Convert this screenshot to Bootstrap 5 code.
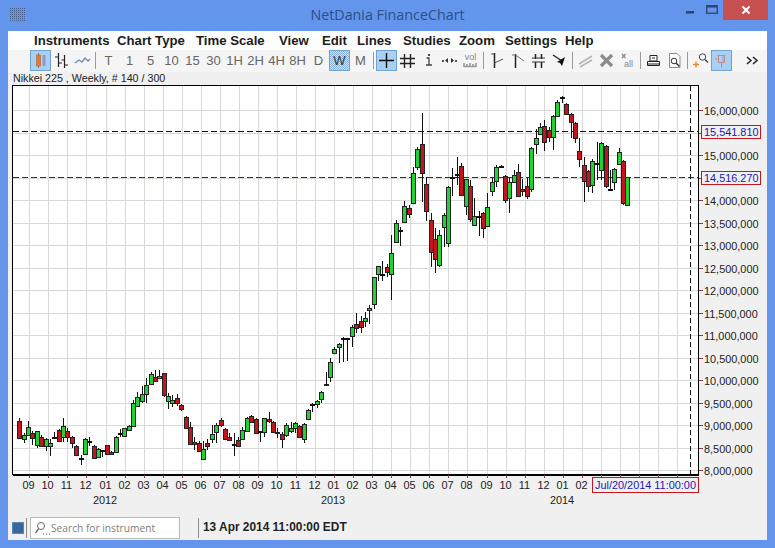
<!DOCTYPE html>
<html lang="en">
<head>
<meta charset="utf-8">
<title>NetDania FinanceChart</title>
<link rel="stylesheet" href="https://cdn.jsdelivr.net/npm/bootstrap@5.3.0/dist/css/bootstrap.min.css">
<style>
html,body{height:100%;overflow:hidden}
body{background:#6495ed;font-family:"Liberation Sans",Arial,sans-serif;color:#222}
.wnd{width:775px;height:548px}
.ttl{height:31px;flex:none;padding:0 7px 0 10px}
.ttl-text{flex:1;text-align:center;font:14.3px/20px "Open Sans",sans-serif;color:#2c4f86;padding:5px 0 0 70px}
.wctl{width:22px;height:20px}
.wclose{width:45px;height:20px;background:#c75050}
.client{flex:1;margin:0 8px 8px 8px;background:#f0f0f0;min-height:0}
.menubar{height:19px;flex:none;background:#fff;padding:1px 0 0 26px;font-weight:700;font-size:13.2px;line-height:18px;color:#1c1c1c}
.menubar span{white-space:nowrap;flex:none}
.menubar span:nth-child(1){width:83px}
.menubar span:nth-child(2){width:79px}
.menubar span:nth-child(3){width:83px}
.menubar span:nth-child(4){width:43px}
.menubar span:nth-child(5){width:35px}
.menubar span:nth-child(6){width:46px}
.menubar span:nth-child(7){width:56px}
.menubar span:nth-child(8){width:46px}
.menubar span:nth-child(9){width:60px}
.tools{height:22px;flex:none;padding:0 0 0 22px;background:#f5f5f5}
.tb{width:21px;height:21px;padding:0;border:1px solid transparent;border-radius:0;background:none;flex:none;font:13px/19px "Liberation Sans",sans-serif;color:#666;text-align:center;white-space:nowrap}
.tb svg{display:block;margin:1px}
.tb.on{background:#a9cff2;border-color:#6fa3d6}
.tb.pick{background:repeating-conic-gradient(#86aedb 0 25%,#d5e5f5 0 50%) 0 0/2px 2px;border-color:#6fa3d6;color:#333}
.tsep{width:1px;height:17px;background:#9a9a9a;margin:2px 2px 0;flex:none}
.infoline{height:13px;flex:none;font-size:10.7px;line-height:13px;padding-left:5px;color:#222;white-space:nowrap}
.plot{display:block;flex:none}
.plot text{font-family:"Liberation Sans",sans-serif;font-size:10.9px;fill:#222}
.plot text.hl{fill:#1a1ab4}
.plot .blueline{stroke:#1a1aff}
.statusbar{height:26px;flex:none;padding-left:4px}
.swatch{width:12px;height:12px;background:#37689d;border:1px solid #5a86b4;flex:none}
.ssep{width:1px;height:20px;background:#8c8c8c;flex:none}
.ssep-a{margin:0 3px 0 2px}
.ssep-b{margin:0 4px 0 18px}
.searchbox{width:150px;height:22px;background:#fff;border:1px solid #b9b9b9;font:10.2px/20px "Open Sans",sans-serif;color:#808080;padding-left:2px;flex:none}
.searchbox svg{flex:none}
.clock{font-weight:700;font-size:11.9px;color:#222;white-space:nowrap}
</style>
</head>
<body>
<div class="wnd d-flex flex-column">
  <div class="ttl d-flex align-items-start">
    <svg width="16" height="14" class="mt-2" aria-hidden="true"><defs><pattern id="dots" width="2" height="2" patternUnits="userSpaceOnUse"><rect width="1" height="1" fill="#44608f"/></pattern></defs><rect width="16" height="14" fill="url(#dots)"/></svg>
    <div class="ttl-text">NetDania FinanceChart</div>
    <div class="wctl d-flex align-items-center justify-content-center"><svg width="8" height="8" aria-hidden="true"><rect y="5" width="8" height="2.5" fill="#2d4468"/></svg></div>
    <div class="wctl d-flex align-items-center justify-content-center"><svg width="12" height="10" aria-hidden="true"><rect x=".75" y=".75" width="10.5" height="7.5" fill="none" stroke="#2d4468" stroke-width="1.3"/><rect x=".5" y=".5" width="11" height="2" fill="#2d4468"/></svg></div>
    <div class="wclose d-flex align-items-center justify-content-center"><svg width="10" height="10" aria-hidden="true"><path d="M1.5 1.5l7 7M8.5 1.5l-7 7" stroke="#fff" stroke-width="2"/></svg></div>
  </div>
  <div class="client d-flex flex-column">
    <div class="menubar d-flex">
      <span>Instruments</span><span>Chart Type</span><span>Time Scale</span><span>View</span><span>Edit</span><span>Lines</span><span>Studies</span><span>Zoom</span><span>Settings</span><span>Help</span>
    </div>
    <div class="tools d-flex align-items-start">
      <button class="tb on" title="Candles"><svg width="17" height="17"><path d="M6.500 1v15" stroke="#8a7a6a"/><rect x="4.500" y="3" width="4" height="11" fill="#e8782c" stroke="#b06a3a" stroke-width=".6"/><path d="M12 3v11" stroke="#8aa0b8" stroke-width="3"/></svg></button>
      <button class="tb"><svg width="17" height="17"><path d="M5.500 1v14M2 5h3.500M5.500 11H9M11.500 3v13M8.500 8h3M11.500 13H15" stroke="#222" stroke-width="1.200" fill="none"/></svg></button>
      <button class="tb"><svg width="17" height="17"><path d="M1 11l4-3 3 2 3-4 3 3 2-2" stroke="#6f8fb2" stroke-width="1.400" fill="none"/></svg></button>
      <span class="tsep"></span>
      <button class="tb">T</button><button class="tb">1</button><button class="tb">5</button><button class="tb">10</button><button class="tb">15</button><button class="tb">30</button><button class="tb">1H</button><button class="tb">2H</button><button class="tb">4H</button><button class="tb">8H</button><button class="tb">D</button><button class="tb pick">W</button><button class="tb">M</button>
      <span class="tsep"></span>
      <button class="tb on"><svg width="17" height="17"><path d="M8.500 1v15M1 8.500h15" stroke="#111" stroke-width="1.400"/></svg></button>
      <button class="tb"><svg width="17" height="17"><path d="M5.500 2v14M11.500 2v14M1 6.500h15M1 11.500h15" stroke="#222" stroke-width="1.400"/></svg></button>
      <button class="tb"><svg width="17" height="17"><path d="M6.500 6h2.500v6.500M6 13h6" stroke="#444" stroke-width="1.300" fill="none"/><rect x="8" y="2" width="2" height="2" fill="#444"/></svg></button>
      <button class="tb"><svg width="17" height="17"><path d="M7 6v5L4 8.500zM10 6v5l3-2.500z" fill="#333"/><rect x="1" y="8" width="2" height="2" fill="#555"/><rect x="14" y="8" width="2" height="2" fill="#555"/></svg></button>
      <button class="tb"><svg width="17" height="17"><text x="8.500" y="8" text-anchor="middle" font-size="9" font-family="Liberation Sans" fill="#888">vol</text><path d="M2 15v-4M5 15v-3M8 15v-4M11 15v-3M14 15v-4M2 14.500h12" stroke="#999" stroke-width="1.600"/></svg></button>
      <span class="tsep"></span>
      <button class="tb"><svg width="17" height="17"><path d="M6.500 1v15" stroke="#222" stroke-width="1.500"/><path d="M6.500 11L15 7M3 2h3" stroke="#555"/></svg></button>
      <button class="tb"><svg width="17" height="17"><path d="M6.500 2v14" stroke="#222" stroke-width="1.500"/><path d="M3 3h3.500L15 9" stroke="#777" fill="none"/></svg></button>
      <button class="tb"><svg width="17" height="17"><path d="M5.500 2v5M11.500 2v5M5.500 10v6M11.500 10v6" stroke="#222" stroke-width="1.500"/><path d="M2 6h13M2 10h13" stroke="#333"/></svg></button>
      <button class="tb"><svg width="17" height="17"><path d="M2 3l9 6" stroke="#222" stroke-width="1.400"/><path d="M14 5l-3 9-2-3-3-1z" fill="#111"/></svg></button>
      <span class="tsep"></span>
      <button class="tb"><svg width="17" height="17"><path d="M2 12L15 4M3 15l12-7" stroke="#b4b4b4" stroke-width="1.500"/></svg></button>
      <button class="tb"><svg width="17" height="17"><path d="M3 3l11 11M14 3L3 14" stroke="#8c8c8c" stroke-width="3.200"/></svg></button>
      <button class="tb"><svg width="17" height="17"><path d="M3 2l3.500 4M6.500 2L3 6" stroke="#8c8c8c" stroke-width="1.400"/><text x="5" y="15" font-size="9" font-family="Liberation Sans" fill="#888">all</text></svg></button>
      <span class="tsep"></span>
      <button class="tb"><svg width="17" height="17"><path d="M5 3.500h7V9H5z" fill="#fff" stroke="#222"/><path d="M2.500 9.500h12v4h-12z" fill="#fff" stroke="#222"/><path d="M2 12h13" stroke="#222"/><path d="M7 6h3" stroke="#222"/></svg></button>
      <button class="tb"><svg width="17" height="17"><path d="M3.500 1.500H11l3 3v11H3.500z" fill="#fff" stroke="#8c8c8c"/><circle cx="8" cy="9" r="2.800" fill="#fff" stroke="#333"/><path d="M10 11l3.500 3.500" stroke="#333" stroke-width="1.400"/></svg></button>
      <span class="tsep"></span>
      <button class="tb"><svg width="17" height="17"><circle cx="10.500" cy="5" r="3.200" fill="none" stroke="#445"/><path d="M13 7.500l3 3" stroke="#445" stroke-width="1.400"/><path d="M1 12.500h6M4 9.500v6" stroke="#e8862c" stroke-width="1.400"/></svg></button>
      <button class="tb on"><svg width="17" height="17"><path d="M4.500 3.500h8M5.500 3.500v7h6v-7M8.500 10.500v5M2 7h2" stroke="#c68a86" fill="none"/><path d="M10 3.500v7" stroke="#8aa6c8"/></svg></button>
      <button class="tb ms-auto me-1"><svg width="17" height="17"><path d="M3 5l4 3.500-4 3.500M9 5l4 3.500-4 3.500" stroke="#222" stroke-width="1.500" fill="none"/></svg></button>
    </div>
    <div class="infoline">Nikkei 225 , Weekly, # 140 / 300</div>
    <svg id="plot" class="plot" width="759" height="430" viewBox="8 85 759 430" shape-rendering="crispEdges" role="img" aria-label="Nikkei 225 weekly candlestick chart"></svg>
    <div class="statusbar d-flex align-items-center">
      <span class="swatch"></span>
      <span class="ssep ssep-a"></span>
      <div class="searchbox d-flex align-items-center"><svg width="18" height="16" aria-hidden="true"><circle cx="8" cy="6" r="3.500" fill="none" stroke="#666"/><path d="M5.500 9l-3 4" stroke="#666" stroke-width="1.300"/><path d="M10 14h1M13 14h1M16 14h1" stroke="#666"/></svg>Search for instrument</div>
      <span class="ssep ssep-b"></span>
      <span class="clock">13 Apr 2014 11:00:00 EDT</span>
    </div>
  </div>
</div>
<script src="https://cdn.jsdelivr.net/npm/bootstrap@5.3.0/dist/js/bootstrap.bundle.min.js"></script>
<script>
// candles: [wick top, wick bottom, body top, body bottom, colour], y = offset + value/3
var segs=[
[360,[[175,236,183,235,'R'],[218,248,224,238,'G'],[183,228,202,224,'G'],[212,255,220,233,'R'],[213,265,214,254,'G'],[226,260,230,258,'R'],[235,272,238,257,'G'],[237,288,250,257,'G'],[217,238,230,232,'K'],[208,245,211,242,'R'],[175,245,199,230,'G'],[205,245,214,231,'R'],[228,265,232,250,'R'],[255,285,259,284,'R'],[285,314,293,295,'K'],[235,283,238,281,'G'],[230,258,243,245,'K'],[256,295,259,293,'R'],[265,290,268,290,'G'],[270,290,270,272,'K'],[254,284,256,282,'R'],[272,285,275,283,'R'],[228,276,230,275,'G'],[208,232,218,222,'K'],[203,228,205,227,'G'],[195,212,197,209,'G'],[120,200,130,199,'G'],[97,138,112,137,'G'],[78,128,103,122,'G'],[55,130,76,101,'G'],[35,75,43,73,'G'],[30,63,50,62,'R'],[30,57,48,55,'G'],[38,110,40,105,'R'],[100,147,109,122,'G'],[105,140,121,128,'G'],[102,138,115,128,'R'],[132,152,134,146,'R'],[168,205,170,203,'R'],[185,252,200,252,'R']]],
[370,[[200,240,216,222,'R'],[213,245,219,243,'R'],[214,268,238,266,'G'],[208,240,219,227,'R'],[165,220,192,206,'G'],[158,218,166,187,'G'],[145,170,150,164,'R'],[175,210,178,206,'R'],[190,212,202,211,'R'],[190,257,222,226,'K'],[200,232,211,227,'R'],[170,210,181,208,'G'],[142,185,144,184,'G'],[135,160,139,157,'R'],[145,188,148,188,'R'],[183,215,184,187,'K'],[143,200,145,187,'G'],[127,158,146,152,'R'],[153,187,156,185,'R'],[175,205,185,190,'G'],[187,233,191,208,'R'],[160,200,166,196,'G'],[157,188,175,184,'G'],[155,190,160,173,'G'],[165,203,167,200,'R'],[160,218,163,208,'G'],[118,150,119,148,'G'],[98,125,103,107,'K'],[90,115,94,101,'G'],[62,100,66,88,'G'],[7,48,41,46,'G']]],
[190,[[505,575,516,560,'G'],[472,490,478,490,'G'],[460,518,462,472,'G'],[442,515,445,447,'K'],[445,512,445,449,'K'],[405,470,411,437,'G'],[370,430,403,415,'R'],[378,428,392,412,'R'],[366,410,385,394,'G'],[345,403,354,361,'G'],[262,357,262,343,'G'],[227,272,227,253,'G'],[213,272,253,256,'K'],[223,262,232,247,'R'],[135,330,190,253,'G'],[90,158,100,157,'G'],[112,167,121,124,'K'],[33,100,48,95,'G'],[45,83,53,73,'R']]],
[90,[[230,338,250,338,'G'],[170,240,177,230,'G'],[70,335,163,250,'R'],[260,392,283,362,'R'],[370,530,391,485,'R'],[415,548,448,508,'R'],[420,530,436,524,'G'],[370,470,376,412,'G'],[288,472,290,458,'G'],[235,318,262,265,'K'],[202,285,252,255,'K'],[220,315,229,314,'R'],[270,375,268,347,'G'],[270,395,289,386,'R'],[325,405,379,404,'G'],[362,438,377,380,'K'],[365,443,369,415,'R'],[310,410,352,409,'G'],[265,318,277,302,'G'],[225,290,232,272,'G'],[225,235,229,232,'K'],[255,340,259,329,'R'],[265,368,277,325,'G'],[240,280,256,277,'G'],[222,320,247,319,'R'],[268,318,297,302,'R'],[265,328,289,319,'R'],[172,305,175,296,'G'],[118,192,145,163,'G'],[100,132,110,131,'G'],[90,183,109,157,'R'],[110,155,121,142,'R'],[75,180,78,142,'G'],[30,80,36,79,'G'],[18,40,21,24,'K'],[40,75,42,73,'R'],[70,145,73,97,'R'],[95,160,100,145,'R'],
[145,230,184,208,'R'],[200,335,226,272,'R'],[240,305,243,289,'R'],[208,310,213,286,'G'],[155,270,220,222,'K'],[155,270,160,241,'G'],[165,295,169,289,'R'],[240,303,298,302,'K'],[235,300,238,277,'G'],[175,225,186,221,'G'],[210,345,213,338,'R'],[260,347,262,346,'G']]]
];
var s='',i,y;
var L=12.5,R=698.5,T=85.5,B=474.5;
function line(a,b,c,d,col,w,dash){return '<line x1="'+a+'" y1="'+b+'" x2="'+c+'" y2="'+d+'" stroke="'+col+'"'+(w?' stroke-width="'+w+'"':'')+(dash?' stroke-dasharray="'+dash+'"':'')+'/>';}
function txt(x,y,t,anchor,hl){return '<text x="'+x+'" y="'+y+'"'+(anchor?' text-anchor="'+anchor+'"':'')+(hl?' class="hl"':'')+'>'+t+'</text>';}
s+='<rect x="'+L+'" y="'+T+'" width="'+(R-L)+'" height="'+(B-T)+'" fill="#fff"/>';
// grid
var gx=[];for(i=0;i<35;i++){gx.push(Math.round(29.3+19.05*i)+.5);}
gx.forEach(function(v){s+=line(v,T,v,B,'#d9d9d9');});
for(i=0;i<=16;i++){y=Math.round(111+22.5*i)-.5;s+=line(L,y,R,y,'#d9d9d9');}
// dashed markers
s+=line(L,131.5,R,131.5,'#111',1,'6 3');
s+='<path class="blueline" d="M'+L+' 177.5H'+R+'" fill="none" stroke-dasharray="6 3"/>';
s+=line(690.5,T,690.5,B,'#111',1,'5 3');
// candles
var n=0;
segs.forEach(function(seg){seg[1].forEach(function(c){
  var cx=Math.round(19.3+4.375*n)+.5,f=function(v){return Math.round(seg[0]+v/3);};
  var top=f(c[2]),bot=f(c[3]);
  s+=line(cx,f(c[0]),cx,f(c[1]),'#111');
  if(c[4]==='K'){s+='<rect x="'+(cx-2.5)+'" y="'+top+'" width="5" height="1.500" fill="#111"/>';}
  else{s+='<rect x="'+(cx-2)+'" y="'+(top+.5)+'" width="3.500" height="'+Math.max(bot-top,1)+'" fill="'+(c[4]==='G'?'#22d233':'#c4141c')+'" stroke="#222"/>';}
  n++;
});});
// frame
s+='<rect x="'+L+'" y="'+T+'" width="'+(R-L)+'" height="'+(B-T)+'" fill="none" stroke="#000"/>';
s+=line(L,B+.5,R,B+.5,'#000');
// price axis: the two marker boxes stand where 15.5M and 14.5M would be
for(i=0;i<=16;i++){
  var p=16000000-500000*i;y=Math.round(111+22.5*i);
  s+=line(699,y-.5,703,y-.5,'#8b3a3a');
  if(p!==15500000&&p!==14500000){s+=txt(704,y+4,String(p).replace(/\B(?=(\d{3})+$)/g,','));}
}
[[125,'15,541.810'],[171,'14,516.270']].forEach(function(b){
  s+='<rect x="701.5" y="'+(b[0]+.5)+'" width="59" height="13" fill="#f0f0f0" stroke="#c8141c"/>';
  s+=txt(704,b[0]+11,b[1],'',true);
});
// time axis
var lab='09 10 11 12 01 02 03 04 05 06 07 08 09 10 11 12 01 02 03 04 05 06 07 08 09 10 11 12 01 02'.split(' ');
gx.forEach(function(v,k){s+=line(v,475,v,478,'#8b3a3a');if(lab[k]){s+=txt(v-1,489,lab[k],'middle');}});
s+=txt(105,504,'2012','middle');s+=txt(333,504,'2013','middle');s+=txt(562,504,'2014','middle');
s+='<rect x="592.5" y="477.5" width="106" height="15" fill="#f0f0f0" stroke="#c8141c"/>';
s+=txt(645.500,489,'Jul/20/2014 11:00:00','middle',true);
document.getElementById('plot').innerHTML=s;
</script>
</body>
</html>
